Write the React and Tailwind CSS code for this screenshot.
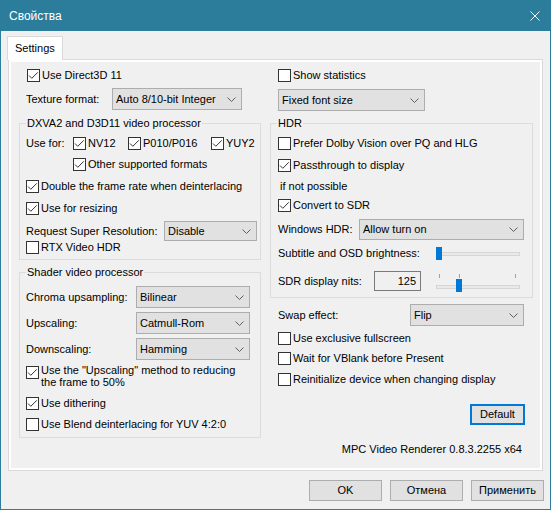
import React from "react";

// Windows 10 style property sheet

function Box({ on, className = "" }) {
  return (
    <span className={`flex h-[13px] w-[13px] shrink-0 items-center justify-center border border-[#333333] bg-white ${className}`}>
      {on && (
        <svg width="11" height="11" viewBox="0 0 11 11">
          <path d="M1 5.5L3.8 8.3L9.8 2.3" fill="none" stroke="#333333" strokeWidth="1" />
        </svg>
      )}
    </span>
  );
}

function Check({ on, className = "", children }) {
  return (
    <div className={`flex h-[13px] shrink-0 items-center gap-[2px] ${className}`}>
      <Box on={on} />
      <span className="whitespace-nowrap">{children}</span>
    </div>
  );
}

function Select({ className = "", children }) {
  return (
    <div className={`flex shrink-0 items-center justify-between border border-[#adadad] bg-[#e1e1e1] pl-[3px] pr-[5px] ${className}`}>
      <span className="whitespace-nowrap">{children}</span>
      <svg width="9" height="5" viewBox="0 0 9 5">
        <path d="M0.5 0.5L4.5 4.5L8.5 0.5" fill="none" stroke="#606060" strokeWidth="1" />
      </svg>
    </div>
  );
}

function Group({ title, className = "", children }) {
  return (
    <div className={`relative flex flex-col border border-[#dcdcdc] ${className}`}>
      <span className="absolute -top-[7px] left-[6px] bg-[#f0f0f0] px-[1px] leading-[13px] whitespace-nowrap">{title}</span>
      {children}
    </div>
  );
}

function Track() {
  return <span className="absolute inset-x-0 h-[4px] border border-[#d6d6d6] bg-[#e7eaea]" />;
}

export default function App() {
  return (
    <div className="h-[510px] w-[551px] border border-[#2c7c9b] bg-[#f0f0f0] font-['Liberation_Sans',Arial,sans-serif] text-[11px] leading-[13px] text-black">
      {/* title bar */}
      <div className="flex h-[30px] items-center justify-between bg-[#2c7c9b] pl-[8px] pr-[10px] text-white">
        <span className="text-[12px]">Свойства</span>
        <svg width="10" height="10" viewBox="0 0 10 10">
          <path d="M0.5 0.5L9.5 9.5M9.5 0.5L0.5 9.5" stroke="white" strokeWidth="1" />
        </svg>
      </div>

      {/* tab */}
      <div className="ml-[6px] mt-[5px] flex">
        <div className="relative z-10 h-[24px] border border-b-0 border-[#d9d9d9] bg-white px-[7px] pt-[5px]">Settings</div>
      </div>

      {/* panel */}
      <div className="-mt-px ml-[7px] h-[412px] w-[535px] border border-[#d9d9d9]">
        <div className="flex h-full border-2 border-white">
          {/* left column */}
          <div className="ml-[8px] flex w-[242px] flex-col">
            <Check on className="ml-[8px] mt-[7px]">Use Direct3D 11</Check>
            <div className="ml-[7px] mt-[6px] flex items-center">
              <span className="w-[86px]">Texture format:</span>
              <Select className="h-[22px] w-[130px]">Auto 8/10-bit Integer</Select>
            </div>

            <Group title="DXVA2 and D3D11 video processor" className="mt-[13px] pb-[5px] pl-[6px] pt-[13px]">
              <div className="flex h-[13px] items-center">
                <span className="w-[47px]">Use for:</span>
                <Check on className="w-[55px]">NV12</Check>
                <Check on className="w-[83px]">P010/P016</Check>
                <Check on>YUY2</Check>
              </div>
              <Check on className="ml-[47px] mt-[8px]">Other supported formats</Check>
              <Check on className="mt-[9px]">Double the frame rate when deinterlacing</Check>
              <Check on className="mt-[9px]">Use for resizing</Check>
              <div className="mt-[6px] flex items-center">
                <span className="w-[138px]">Request Super Resolution:</span>
                <Select className="h-[20px] w-[93px]">Disable</Select>
              </div>
              <Check>RTX Video HDR</Check>
            </Group>

            <Group title="Shader video processor" className="mt-[12px] pb-[6px] pl-[6px] pt-[13px]">
              <div className="flex items-center">
                <span className="w-[110px]">Chroma upsampling:</span>
                <Select className="h-[22px] w-[114px]">Bilinear</Select>
              </div>
              <div className="mt-[4px] flex items-center">
                <span className="w-[110px]">Upscaling:</span>
                <Select className="h-[22px] w-[114px]">Catmull-Rom</Select>
              </div>
              <div className="mt-[4px] flex items-center">
                <span className="w-[110px]">Downscaling:</span>
                <Select className="h-[22px] w-[114px]">Hamming</Select>
              </div>
              <div className="mt-[4px] flex items-start gap-[2px]">
                <Box on className="mt-[2px]" />
                <span className="leading-[12px]">
                  Use the "Upscaling" method to reducing
                  <br />
                  the frame to 50%
                </span>
              </div>
              <Check on className="mt-[9px]">Use dithering</Check>
              <Check className="mt-[8px]">Use Blend deinterlacing for YUV 4:2:0</Check>
            </Group>
          </div>

          {/* right column */}
          <div className="ml-[9px] flex w-[263px] flex-col">
            <Check className="ml-[8px] mt-[7px]">Show statistics</Check>
            <Select className="ml-[8px] mt-[7px] h-[22px] w-[147px]">Fixed font size</Select>

            <Group title="HDR" className="mt-[12px] pb-[5px] pl-[7px] pt-[13px]">
              <Check>Prefer Dolby Vision over PQ and HLG</Check>
              <Check on className="mt-[9px]">Passthrough to display</Check>
              <div className="ml-[2px] mt-[8px] h-[13px]">if not possible</div>
              <Check on className="mt-[6px]">Convert to SDR</Check>
              <div className="mt-[7px] flex items-center">
                <span className="w-[81px]">Windows HDR:</span>
                <Select className="h-[21px] w-[165px]">Allow turn on</Select>
              </div>
              <div className="mt-[7px] flex items-center">
                <span className="w-[158px] whitespace-nowrap">Subtitle and OSD brightness:</span>
                <div className="relative h-[13px] w-[84px]">
                  <span className="absolute inset-x-0 top-[5px] h-[4px] border border-[#d6d6d6] bg-[#e7eaea]" />
                  <span className="absolute left-0 top-0 h-[13px] w-[6px] bg-[#0078d7]" />
                </div>
              </div>
              <div className="mt-[11px] flex items-start">
                <span className="w-[96px] self-center">SDR display nits:</span>
                <div className="flex h-[20px] w-[47px] items-center justify-end border border-[#7a7a7a] pr-[4px]">125</div>
                <div className="relative ml-[15px] mt-[3px] h-[18px] w-[84px]">
                  <span className="absolute left-[3px] top-0 h-[4px] w-px bg-[#a0a0a0]" />
                  <span className="absolute left-[23px] top-0 h-[4px] w-px bg-[#a0a0a0]" />
                  <span className="absolute left-[79px] top-0 h-[4px] w-px bg-[#a0a0a0]" />
                  <span className="absolute inset-x-0 top-[11px] h-[4px] border border-[#d6d6d6] bg-[#e7eaea]" />
                  <span className="absolute left-[20px] top-[5px] h-[13px] w-[6px] bg-[#0078d7]" />
                </div>
              </div>
            </Group>

            <div className="ml-[8px] mt-[6px] flex items-center">
              <span className="w-[132px]">Swap effect:</span>
              <Select className="h-[22px] w-[114px]">Flip</Select>
            </div>
            <Check className="ml-[8px] mt-[6px]">Use exclusive fullscreen</Check>
            <Check className="ml-[8px] mt-[7px]">Wait for VBlank before Present</Check>
            <Check className="ml-[8px] mt-[8px]">Reinitialize device when changing display</Check>
            <div className="mt-[18px] flex justify-end pr-[8px]">
              <button className="h-[21px] w-[55px] border-2 border-[#0078d7] bg-[#e1e1e1]">Default</button>
            </div>
            <div className="mt-[18px] pr-[11px] text-right whitespace-nowrap">MPC Video Renderer 0.8.3.2255 x64</div>
          </div>
        </div>
      </div>

      {/* dialog buttons */}
      <div className="mt-[9px] flex justify-end gap-[8px] pr-[6px]">
        <button className="h-[21px] w-[73px] border border-[#adadad] bg-[#e1e1e1]">OK</button>
        <button className="h-[21px] w-[73px] border border-[#adadad] bg-[#e1e1e1]">Отмена</button>
        <button className="h-[21px] w-[73px] border border-[#adadad] bg-[#e1e1e1]">Применить</button>
      </div>
    </div>
  );
}
